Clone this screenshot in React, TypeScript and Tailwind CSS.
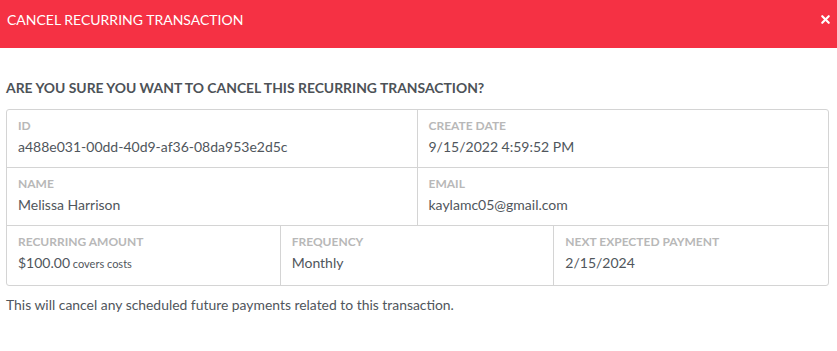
import { X } from 'lucide-react'

interface Field {
  label: string
  value: string
  note?: string
}

function Cell({ field, className }: { field: Field; className?: string }) {
  return (
    <div className={`px-[11px] pt-[8px] pb-[10px] ${className ?? ''}`}>
      <div className="text-[12px] leading-[16px] font-bold text-[#b8b8b8] uppercase">{field.label}</div>
      <div className="mt-[3px] text-[14px] leading-[20px] text-[#50565c]">
        {field.value}
        {field.note && <span className="text-[11px]"> {field.note}</span>}
      </div>
    </div>
  )
}

export default function App() {
  return (
    <div className="w-[837px] h-[351px] bg-white font-['Lato',sans-serif]">
      {/* Header */}
      <div className="h-[48px] bg-[#f53144] flex items-center justify-between pl-[7px] pr-[5px] pb-[10px]">
        <span className="text-white text-[14px] uppercase">Cancel Recurring Transaction</span>
        <X className="h-[13px] w-[13px] text-white" strokeWidth={4} />
      </div>

      {/* Body */}
      <div className="px-[6px] pt-[31px]">
        <h2 className="text-[13.9px] leading-[18px] font-bold text-[#4d5257] uppercase">
          Are you sure you want to cancel this recurring transaction?
        </h2>

        <div className="mt-[12px] w-[823px] border border-[#d4d4d4] rounded-[3px]">
          <div className="grid grid-cols-2 border-b border-[#d4d4d4]">
            <Cell field={{ label: 'ID', value: 'a488e031-00dd-40d9-af36-08da953e2d5c' }} className="border-r border-[#d4d4d4]" />
            <Cell field={{ label: 'Create Date', value: '9/15/2022 4:59:52 PM' }} />
          </div>
          <div className="grid grid-cols-2 border-b border-[#d4d4d4]">
            <Cell field={{ label: 'Name', value: 'Melissa Harrison' }} className="border-r border-[#d4d4d4]" />
            <Cell field={{ label: 'Email', value: 'kaylamc05@gmail.com' }} />
          </div>
          <div className="grid grid-cols-3">
            <Cell field={{ label: 'Recurring Amount', value: '$100.00', note: 'covers costs' }} className="border-r border-[#d4d4d4] pb-[11px]" />
            <Cell field={{ label: 'Frequency', value: 'Monthly' }} className="border-r border-[#d4d4d4] pb-[11px]" />
            <Cell field={{ label: 'Next Expected Payment', value: '2/15/2024' }} className="pb-[11px]" />
          </div>
        </div>

        <p className="mt-[10px] text-[13.9px] leading-[18px] text-[#50565c]">
          This will cancel any scheduled future payments related to this transaction.
        </p>
      </div>
    </div>
  )
}
